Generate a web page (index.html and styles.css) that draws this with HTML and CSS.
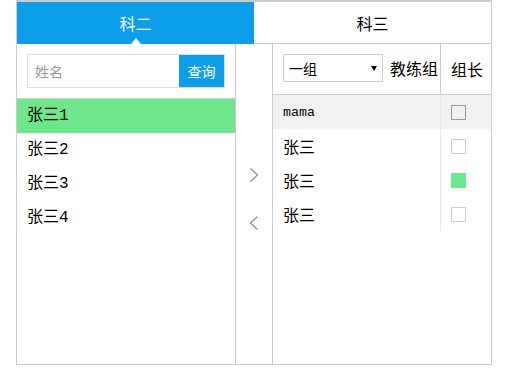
FILE: index.html
```html
<!DOCTYPE html>
<html lang="zh-CN">

<head>
    <meta charset="UTF-8" />
    <title>分组</title>
    <link rel="stylesheet" href="styles.css">
</head>

<body>
    <div class="transfer">
        <div class="tabs">
            <div class="tab tab-active">科二<span class="tab-caret"></span></div>
            <div class="tab tab-idle">科三</div>
        </div>

        <div class="panes">
            <!-- 学员列表 -->
            <div class="pane-left">
                <div class="search">
                    <div class="search-box">
                        <input type="text" placeholder="姓名">
                        <button>查询</button>
                    </div>
                </div>
                <ul class="people">
                    <li class="on">张三1</li>
                    <li>张三2</li>
                    <li>张三3</li>
                    <li>张三4</li>
                </ul>
            </div>

            <!-- 移入 / 移出 -->
            <div class="mover">
                <svg class="arrow" width="10" height="14" viewBox="0 0 10 14">
                    <polyline points="1.5,0.5 8.5,7 1.5,13.5" />
                </svg>
                <svg class="arrow" width="10" height="14" viewBox="0 0 10 14">
                    <polyline points="8.5,0.5 1.5,7 8.5,13.5" />
                </svg>
            </div>

            <!-- 教练组 -->
            <div class="pane-right">
                <div class="grid-head">
                    <div class="cell-main">
                        <label class="select-wrap">
                            <select class="group-select">
                                <option>一组</option>
                                <option>二组</option>
                            </select>
                        </label>
                        <span class="head-label">教练组</span>
                    </div>
                    <div class="cell-lead">组长</div>
                </div>
                <div class="grid-row row-hover">
                    <div class="cell-main latin">mama</div>
                    <div class="cell-lead"><span class="check check-focus"></span></div>
                </div>
                <div class="grid-row">
                    <div class="cell-main">张三</div>
                    <div class="cell-lead"><span class="check"></span></div>
                </div>
                <div class="grid-row">
                    <div class="cell-main">张三</div>
                    <div class="cell-lead"><span class="check checked"></span></div>
                </div>
                <div class="grid-row">
                    <div class="cell-main">张三</div>
                    <div class="cell-lead"><span class="check"></span></div>
                </div>
            </div>
        </div>
    </div>
</body>

</html>
```

FILE: styles.css
```css
body {
    margin: 0;
    background-color: #fff;
    color: #000;
    font-family: "Noto Sans CJK SC", sans-serif;
}

.transfer {
    margin-left: 16px;
    width: 476px;
    height: 365px;
    box-sizing: border-box;
    border: 1px solid #ccc;
    border-top-width: 2px;
    display: flex;
    flex-direction: column;
}

/* Tabs */
.tabs {
    display: flex;
    height: 42px;
}

.tab {
    position: relative;
    display: flex;
    align-items: center;
    justify-content: center;
    box-sizing: border-box;
    font-size: 16px;
}

.tab-active {
    width: 237px;
    background-color: #0c9ee9;
    color: #fff;
}

.tab-idle {
    flex: 1;
    border-bottom: 1px solid #ccc;
}

.tab-caret {
    position: absolute;
    bottom: 0;
    left: 50%;
    margin-left: -5px;
    border-left: 5px solid transparent;
    border-right: 5px solid transparent;
    border-bottom: 6px solid #fff;
}

.panes {
    flex: 1;
    display: flex;
    min-height: 0;
}

/* Left list */
.pane-left {
    width: 219px;
    box-sizing: border-box;
    border-right: 1px solid #ccc;
}

.search {
    padding: 10px;
    border-bottom: 1px solid #ccc;
}

.search-box {
    display: flex;
    height: 34px;
    box-sizing: border-box;
    border: 1px solid #ddd;
}

.search-box input {
    flex: 1;
    min-width: 0;
    border: 0;
    padding: 0 0 0 7px;
    outline: none;
    font-family: "Noto Sans CJK SC", sans-serif;
    font-size: 14px;
}

.search-box input::placeholder {
    color: #999;
}

.search-box button {
    width: 45px;
    border: 0;
    padding: 0;
    background-color: #0c9ee9;
    color: #fff;
    font-family: "Noto Sans CJK SC", sans-serif;
    font-size: 14px;
}

.people {
    list-style: none;
    margin: 0;
    padding: 0;
}

.people li {
    height: 34px;
    line-height: 34px;
    padding-left: 10px;
    font-family: "Liberation Mono", "Noto Sans CJK SC", monospace;
    font-size: 16px;
}

.people li.on {
    background-color: #6ee68c;
}

/* Middle arrows */
.mover {
    width: 37px;
    box-sizing: border-box;
    border-right: 1px solid #ccc;
    display: flex;
    flex-direction: column;
    align-items: center;
    padding-top: 124px;
    gap: 34px;
}

.arrow polyline {
    fill: none;
    stroke: #8c8c8c;
    stroke-width: 1.2;
}

/* Right table */
.pane-right {
    flex: 1;
}

.grid-head {
    display: flex;
    height: 51px;
    box-sizing: border-box;
    border-bottom: 1px solid #ccc;
}

.grid-head .cell-main {
    align-items: flex-start;
    padding-top: 10px;
}

.grid-head .cell-lead {
    border-left-color: #ccc;
    font-size: 16px;
}

.grid-row {
    display: flex;
    height: 34px;
}

.row-hover {
    background-color: #f1f1f1;
}

.cell-main {
    flex: 1;
    display: flex;
    align-items: center;
    padding-left: 10px;
    font-size: 16px;
}

.cell-main.latin {
    font-family: "Liberation Mono", monospace;
    font-size: 13.3px;
}

.cell-lead {
    width: 51px;
    box-sizing: border-box;
    border-left: 1px solid #e6e6e6;
    display: flex;
    align-items: center;
    padding-left: 10px;
}

.select-wrap {
    position: relative;
    display: block;
}

.select-wrap::after {
    content: "";
    position: absolute;
    right: 6px;
    top: 12px;
    border-left: 3px solid transparent;
    border-right: 3px solid transparent;
    border-top: 5px solid #000;
    pointer-events: none;
}

.group-select {
    appearance: none;
    width: 100px;
    height: 28px;
    box-sizing: border-box;
    border: 1px solid #ccc;
    border-radius: 0;
    background-color: #fff;
    padding: 0 0 0 5px;
    font-family: "Noto Sans CJK SC", sans-serif;
    font-size: 14px;
    color: #000;
}

.head-label {
    margin-left: 7px;
    line-height: 28px;
}

.check {
    width: 15px;
    height: 15px;
    box-sizing: border-box;
    border: 1px solid #ccc;
    background-color: #fff;
}

.check-focus {
    border-color: #999;
    background-color: transparent;
}

.check.checked {
    border-color: #6ee68c;
    background-color: #6ee68c;
}
```
